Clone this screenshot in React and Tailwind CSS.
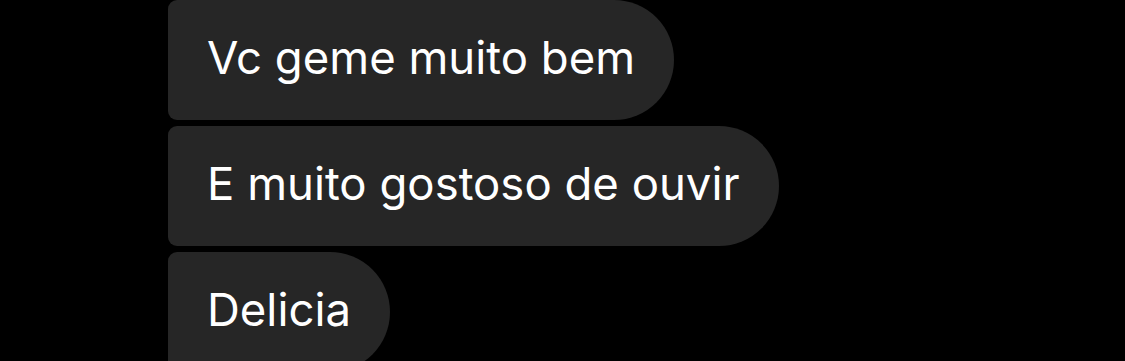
import React from 'react';

const messages = ['Vc geme muito bem', 'E muito gostoso de ouvir', 'Delicia'];

export default function App() {
  return (
    <div className="h-[361px] w-[1125px] overflow-hidden bg-black">
      <div className="flex flex-col items-start gap-[6px] pl-[168px] pt-0">
        {messages.map((m) => (
          <div
            key={m}
            className="flex h-[120px] items-center rounded-l-[9px] rounded-r-[60px] bg-[#262626] px-[39px] pb-[4px] text-[45.5px] text-white"
            style={{ fontFamily: 'Inter, "Noto Sans", sans-serif' }}
          >
            {m}
          </div>
        ))}
      </div>
    </div>
  );
}
